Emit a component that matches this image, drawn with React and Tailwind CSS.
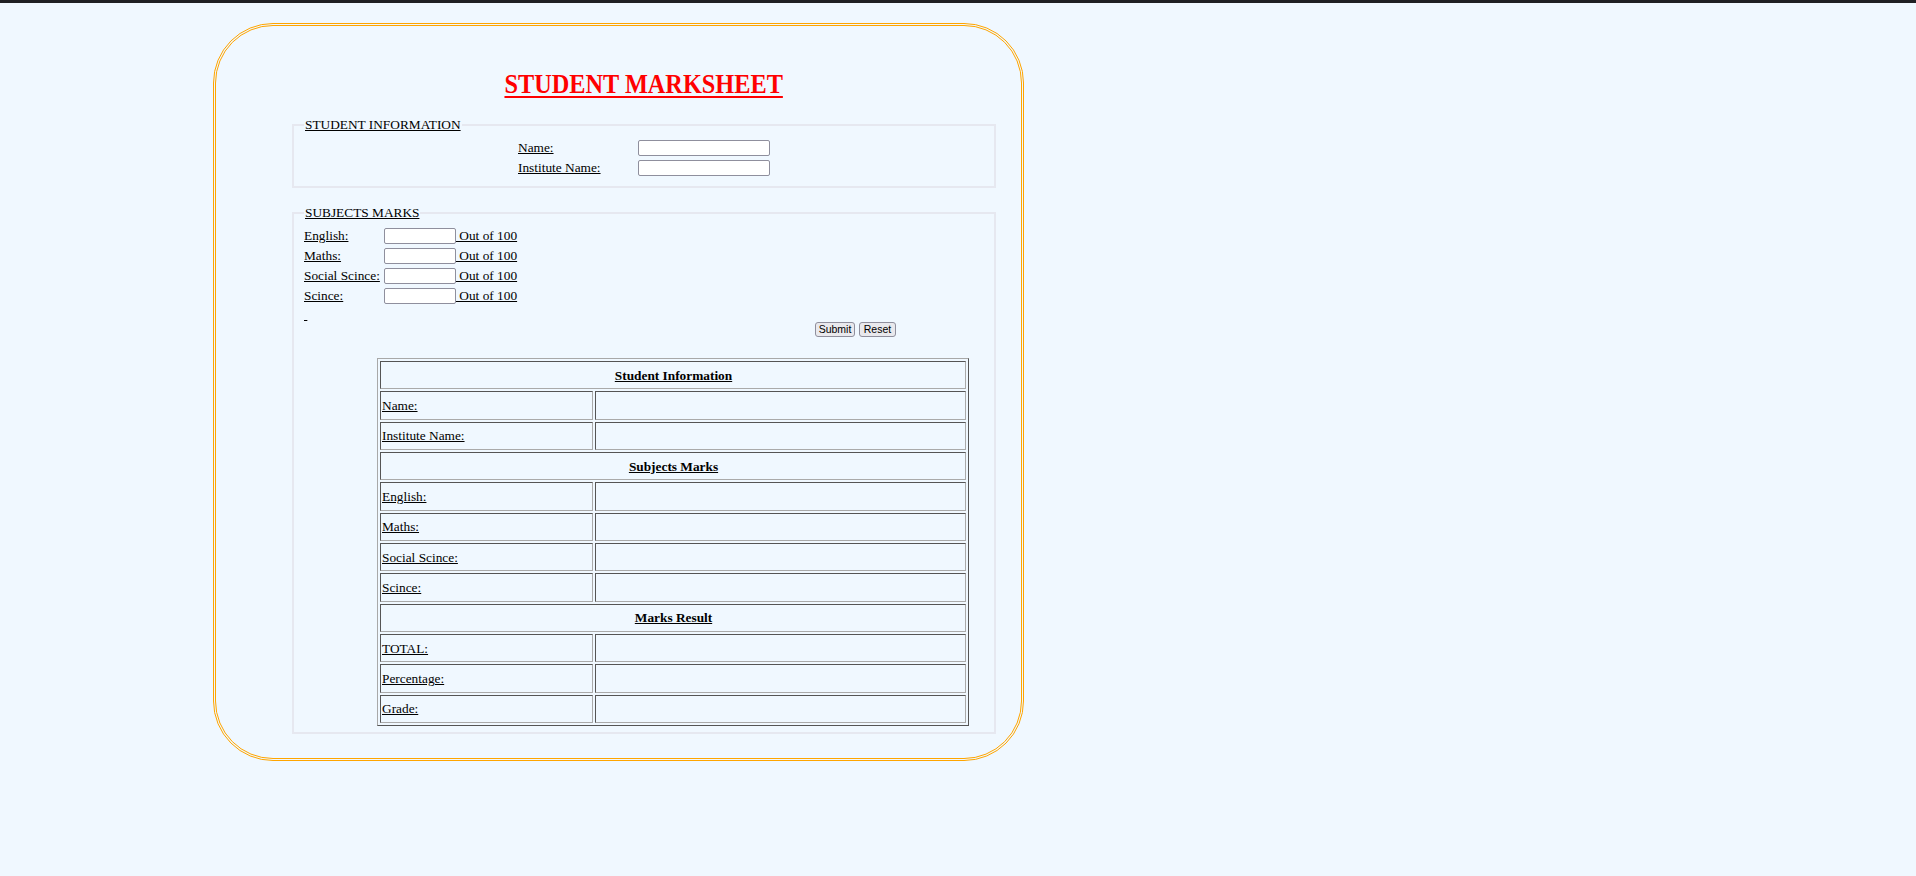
import React from "react";

const infoRows = ["Name:", "Institute Name:"];
const subjects = ["English:", "Maths:", "Social Scince:", "Scince:"];

const tableSections = [
  { title: "Student Information", rows: ["Name:", "Institute Name:"] },
  { title: "Subjects Marks", rows: ["English:", "Maths:", "Social Scince:", "Scince:"] },
  { title: "Marks Result", rows: ["TOTAL:", "Percentage:", "Grade:"] },
];

function Cell({ children, className = "", colSpan }) {
  return (
    <td
      colSpan={colSpan}
      className={
        "h-[28.33px] border border-t-[#555555] border-l-[#555555] border-r-[#aaaaaa] border-b-[#aaaaaa] p-0 pl-px align-middle leading-[15px] " +
        className
      }
    >
      {children}
    </td>
  );
}

export default function App() {
  return (
    <div className="min-h-screen w-full bg-[#f0f8ff] font-['Liberation_Serif',serif] text-[13.33px] text-black">
      <div className="h-[3px] w-full bg-[#1f2023]" />
      <div className="ml-[213px] mt-[20px] h-[738px] w-[811px] rounded-[60px] border-[3px] border-double border-[#ffa500]">
        <div className="pl-[76px] pt-[43px]">
          <div className="w-[704px]">
            <h1 className="text-center text-[27px] font-bold leading-[30px] text-[#ff0000]">
              <span className="inline-block origin-center scale-x-[0.9] underline decoration-[2px] underline-offset-[3px]">
                STUDENT MARKSHEET
              </span>
            </h1>

            <fieldset className="mt-[18px] border-2 border-[#e6e8f0] px-[10px] pb-[10px] pt-[8px]">
              <legend className="px-[1px] leading-[15px] underline">STUDENT INFORMATION</legend>
              <div className="mx-auto grid w-fit grid-cols-[120px_132px] gap-y-[4px]">
                {infoRows.map((r) => (
                  <React.Fragment key={r}>
                    <div className="h-[16px] leading-[16px]">
                      <u>{r}</u>
                    </div>
                    <input
                      type="text"
                      className="h-[16px] w-[132px] rounded-[2px] border border-[#8f8f9d] bg-white"
                    />
                  </React.Fragment>
                ))}
              </div>
            </fieldset>

            <fieldset className="mt-[17px] border-2 border-[#e6e8f0] px-[10px] pb-[6px] pt-[8px]">
              <legend className="px-[1px] leading-[15px] underline">SUBJECTS MARKS</legend>
              <div className="flex flex-col gap-[4px]">
                {subjects.map((s) => (
                  <div key={s} className="flex h-[16px] items-center leading-[16px]">
                    <div className="w-[80px]">
                      <u>{s}</u>
                    </div>
                    <input
                      type="text"
                      className="h-[16px] w-[72px] rounded-[2px] border border-[#8f8f9d] bg-white"
                    />
                    <u className="whitespace-pre">{" Out of 100"}</u>
                  </div>
                ))}
              </div>
              <div className="h-[18px] pt-[3px] leading-[16px]">
                <u>{"\u00a0"}</u>
              </div>
              <div className="flex h-[15px] gap-[4px] pl-[511px] font-['Liberation_Sans',sans-serif] text-[10.5px]">
                <button className="h-[15px] w-[40px] rounded-[3px] border border-[#8f8f9d] bg-[#e9e9ed] p-0 text-center leading-[13px]">
                  Submit
                </button>
                <button className="h-[15px] w-[37px] rounded-[3px] border border-[#8f8f9d] bg-[#e9e9ed] p-0 text-center leading-[13px]">
                  Reset
                </button>
              </div>

              <table className="ml-[73px] mt-[21px] w-[592px] table-fixed border-separate border-spacing-[2px] border border-t-[#a8a8a8] border-l-[#a8a8a8] border-r-[#555555] border-b-[#555555]">
                <colgroup>
                  <col className="w-[213px]" />
                  <col />
                </colgroup>
                <tbody>
                  {tableSections.map((sec) => (
                    <React.Fragment key={sec.title}>
                      <tr>
                        <Cell colSpan={2} className="text-center font-bold">
                          <u>{sec.title}</u>
                        </Cell>
                      </tr>
                      {sec.rows.map((r) => (
                        <tr key={sec.title + r}>
                          <Cell>
                            <u>{r}</u>
                          </Cell>
                          <Cell />
                        </tr>
                      ))}
                    </React.Fragment>
                  ))}
                </tbody>
              </table>
            </fieldset>
          </div>
        </div>
      </div>
    </div>
  );
}
